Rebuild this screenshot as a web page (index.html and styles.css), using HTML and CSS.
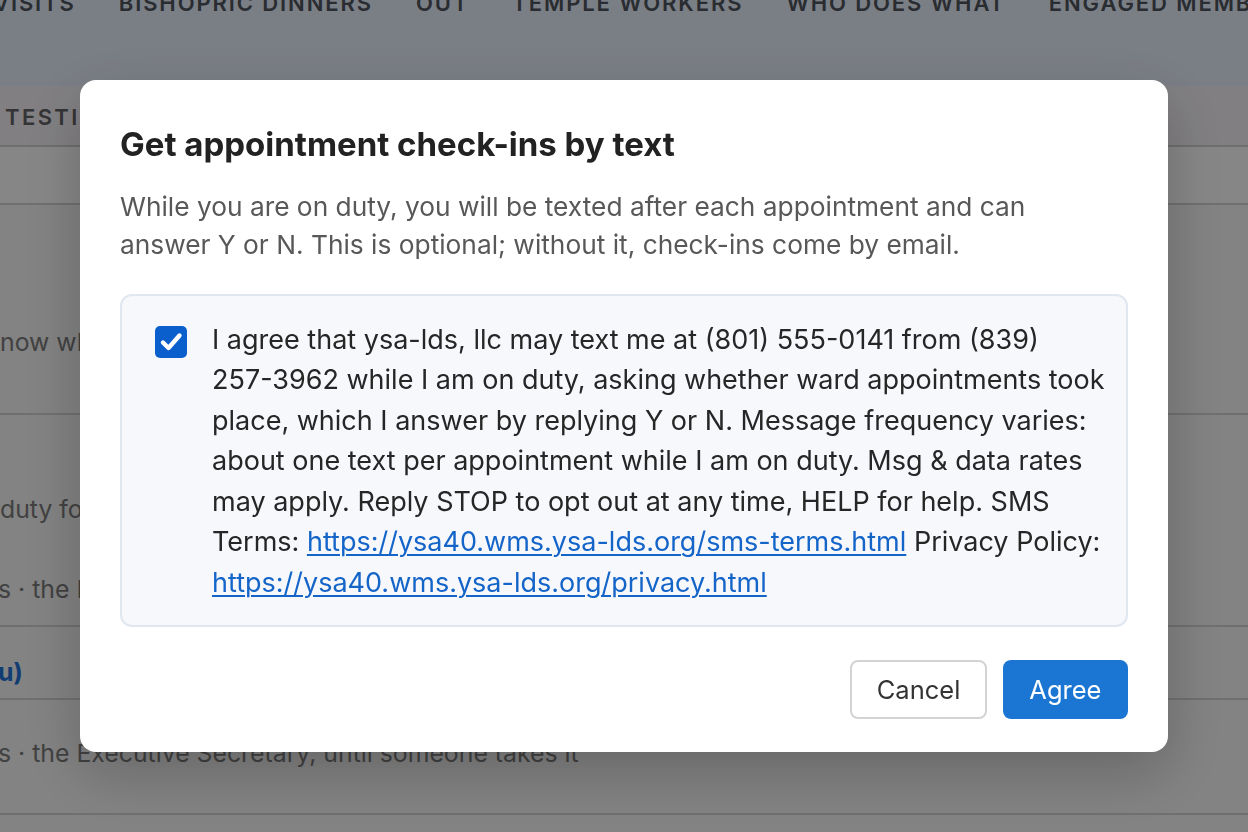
FILE: index.html
```html
<!DOCTYPE html>
<html lang="en">
<head>
<meta charset="utf-8">
<title>Get appointment check-ins by text</title>
<link rel="stylesheet" href="styles.css">
</head>
<body>
<div class="page">
  <nav class="topnav">
    <div class="topnav-items">
      <span>Visits</span>
      <span>Bishopric Dinners</span>
      <span>Out</span>
      <span>Temple Workers</span>
      <span>Who Does What</span>
      <span>Engaged Members</span>
    </div>
  </nav>
  <div class="subtabs"><span>Testimonies</span></div>
  <div class="toolbar"></div>
  <section class="rows">
    <div class="row row-1"><p class="muted">now what you need from us this week</p></div>
    <div class="row row-2">
      <p class="muted">duty for the week of the 14th</p>
      <p class="muted second">s · the Executive Secretary, until someone takes it</p>
    </div>
    <div class="row row-3"><p class="name">u)</p></div>
    <div class="row row-4"><p class="muted">s · the Executive Secretary, until someone takes it</p></div>
    <div class="row row-5"></div>
  </section>
</div>

<div class="overlay">
  <div class="modal" role="dialog" aria-labelledby="dlg-title">
    <h2 id="dlg-title" class="modal-title">Get appointment check-ins by text</h2>
    <p class="modal-lead">While you are on duty, you will be texted after each appointment and can answer Y or N. This is optional; without it, check-ins come by email.</p>
    <label class="consent">
      <input class="consent-input" type="checkbox" checked>
      <span class="checkbox" aria-hidden="true">
        <svg viewBox="0 0 32 32" width="32" height="32"><path d="M8 16.5 L13.5 22 L24.5 9.5" fill="none" stroke="#fff" stroke-width="4.4" stroke-linecap="round" stroke-linejoin="round"/></svg>
      </span>
      <span class="consent-text">I agree that ysa-lds, llc may text me at (801) 555-0141 from (839) 257-3962 while I am on duty, asking whether ward appointments took place, which I answer by replying Y or N. Message frequency varies: about one text per appointment while I am on duty. Msg &amp; data rates may apply. Reply STOP to opt out at any time, HELP for help. SMS Terms: <a href="#">https://ysa40.wms.ysa-lds.org/sms-terms.html</a> Privacy Policy: <a href="#">https://ysa40.wms.ysa-lds.org/privacy.html</a></span>
    </label>
    <div class="actions">
      <button class="btn btn-cancel" type="button">Cancel</button>
      <button class="btn btn-primary" type="button">Agree</button>
    </div>
  </div>
</div>
</body>
</html>
```

FILE: styles.css
```css
* { box-sizing: border-box; }

html, body {
  margin: 0;
  padding: 0;
  height: 100%;
  overflow: hidden;
}

body {
  font-family: Inter, "Noto Sans", "Liberation Sans", sans-serif;
  background: #eeeeee;
  color: #222;
}

/* ---------- background page ---------- */
.page {
  width: 100%;
  height: 100%;
  overflow: hidden;
}

.topnav {
  height: 86px;
  background: #dfe6f3;
  overflow: hidden;
}

.topnav-items {
  display: flex;
  gap: 43px;
  margin-top: -11px;
  margin-left: -7px;
  white-space: nowrap;
  font-size: 22px;
  font-weight: 600;
  letter-spacing: 1.9px;
  text-transform: uppercase;
  color: #4c5058;
  line-height: 28px;
}

.subtabs {
  height: 61px;
  background: #ebe8ed;
  border-bottom: 2px solid #c9c7cb;
  display: flex;
  align-items: center;
  padding-left: 5px;
  padding-top: 2px;
  font-size: 22px;
  font-weight: 600;
  letter-spacing: 2.4px;
  text-transform: uppercase;
  color: #5f5f62;
}

.toolbar {
  height: 58px;
  background: #f5f5f5;
  border-bottom: 2px solid #cbcbcb;
}

.rows {
  background: #eeeeee;
}

.row {
  border-bottom: 2px solid #cbcbcb;
  white-space: nowrap;
  overflow: hidden;
}

.row p {
  margin: 0;
  font-size: 24.8px;
  line-height: 36px;
}

.muted { color: #777; }

.name {
  color: #1f6fd0;
  font-weight: 700;
}

.row-1 { height: 210px; padding-top: 119px; }
.row-2 { height: 212px; padding-top: 76px; }
.row-2 .second { margin-top: 44px; margin-left: -2px; }
.row-3 { height: 73px; padding-top: 27px; margin-left: -2px; }
.row-4 { height: 115px; padding-top: 35px; }
.row-4 p { margin-left: -2px; }
.row-5 { height: 60px; border-bottom: none; }

/* ---------- overlay + modal ---------- */
.overlay {
  position: fixed;
  inset: 0;
  background: rgba(0, 0, 0, 0.45);
  display: flex;
  align-items: center;
  justify-content: center;
  padding: 80px;
}

.modal {
  width: 100%;
  background: #fff;
  border-radius: 16px;
  padding: 44px 40px 33px;
  box-shadow: 0 20px 60px rgba(0, 0, 0, 0.22);
}

.modal-title {
  margin: 0;
  font-size: 33px;
  line-height: 40px;
  font-weight: 700;
  color: #222;
  letter-spacing: 0;
}

.modal-lead {
  margin: 24px 0 0;
  max-width: 960px;
  font-size: 26.3px;
  line-height: 38px;
  color: #585858;
}

.consent {
  margin-top: 30px;
  display: flex;
  gap: 25px;
  align-items: flex-start;
  background: #f6f8fc;
  border: 2px solid #e0e7f1;
  border-radius: 12px;
  padding: 24px 20px 22px 33px;
  cursor: pointer;
}

.consent-input {
  position: absolute;
  opacity: 0;
  width: 1px;
  height: 1px;
  margin: 0;
}

.checkbox {
  flex: none;
  width: 32px;
  height: 32px;
  margin-top: 6px;
  border-radius: 5px;
  background: #0b5fcc;
  display: flex;
}

.checkbox svg { display: block; }

.consent-text {
  font-size: 27px;
  line-height: 40.5px;
  color: #262626;
}

.consent-text a {
  color: #1565c9;
  text-decoration: underline;
  text-underline-offset: 3px;
  text-decoration-thickness: 1.5px;
}

.actions {
  margin-top: 33px;
  display: flex;
  justify-content: flex-end;
  gap: 16px;
}

.btn {
  font-family: inherit;
  font-size: 25.5px;
  line-height: 29px;
  height: 59px;
  padding: 0 24.5px;
  border-radius: 8px;
  cursor: pointer;
}

.btn-cancel {
  background: #fff;
  color: #333;
  border: 2px solid #d3d3d3;
}

.btn-primary {
  background: #1b76d3;
  color: #fff;
  border: 2px solid #1b76d3;
}
```
